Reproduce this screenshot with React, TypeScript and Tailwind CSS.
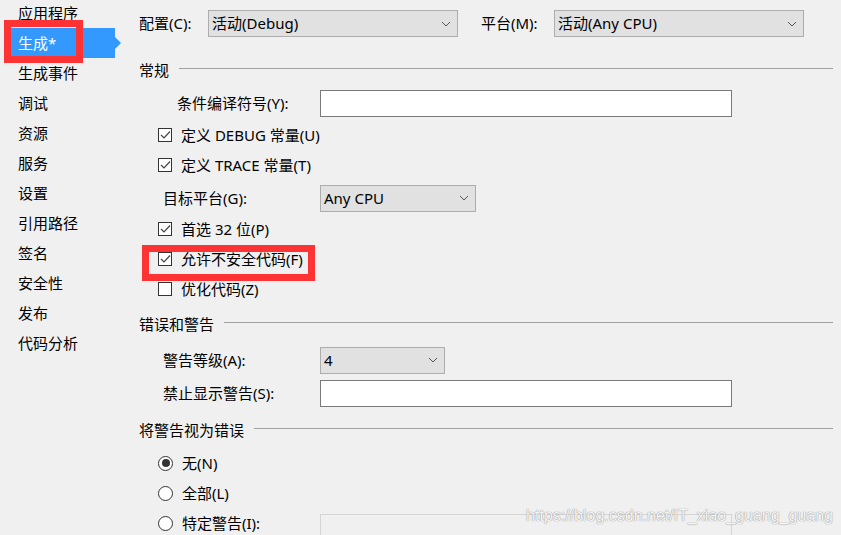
import React from 'react';

const navItems = ['应用程序', '生成*', '生成事件', '调试', '资源', '服务', '设置', '引用路径', '签名', '安全性', '发布', '代码分析'];

const Check: React.FC<{ checked?: boolean }> = ({ checked }) => (
  <span className="w-[14px] h-[14px] border border-[#333] bg-white flex items-center justify-center shrink-0">
    {checked && (
      <svg width="11" height="10" viewBox="0 0 11 10">
        <path d="M1 5 L4 8 L10 1.5" fill="none" stroke="#444" strokeWidth="1.2" />
      </svg>
    )}
  </span>
);

const Radio: React.FC<{ checked?: boolean }> = ({ checked }) => (
  <span className="w-[15px] h-[15px] rounded-full border border-[#333] bg-white flex items-center justify-center shrink-0">
    {checked && <span className="w-[8px] h-[8px] rounded-full bg-[#333]" />}
  </span>
);

const Chevron = () => (
  <svg width="10" height="6" viewBox="0 0 10 6" className="shrink-0">
    <path d="M1 1 L5 5 L9 1" fill="none" stroke="#555" strokeWidth="1" />
  </svg>
);

const Select: React.FC<{ value: string; width: string }> = ({ value, width }) => (
  <div className={`${width} h-[27px] border border-[#adadad] bg-[#e1e1e1] flex items-center justify-between pl-[3px] pr-[6px]`}>
    <span>{value}</span>
    <Chevron />
  </div>
);

const Section: React.FC<{ title: string; className: string }> = ({ title, className }) => (
  <div className={`h-[20px] flex items-center pl-[3px] ${className}`}>
    <span>{title}</span>
    <div className="flex-1 h-px bg-[#a0a0a0] ml-[10px] mt-[-4px]" />
  </div>
);

const CheckRow: React.FC<{ label: string; checked?: boolean; className?: string }> = ({ label, checked, className = '' }) => (
  <div className={`h-[30px] flex items-center pl-[22px] gap-[9px] ${className}`}>
    <Check checked={checked} />
    <span>{label}</span>
  </div>
);

export default function App() {
  return (
    <div
      className="relative w-[841px] h-[535px] overflow-hidden bg-[#f0f0f0] text-black text-[15px] flex"
      style={{ fontFamily: '"Noto Sans", "Noto Sans CJK SC", sans-serif' }}
    >
      {/* left nav */}
      <div className="w-[136px] shrink-0 mt-[-2px] pl-[11px]">
        {navItems.map((item, i) =>
          i === 1 ? (
            <div key={item} className="relative h-[30px] w-[104px] bg-[#3399ff] text-white flex items-center pl-[7px]">
              {item}
              <span className="absolute left-[104px] top-[9px] w-0 h-0 border-y-[6px] border-y-transparent border-l-[6px] border-l-[#3399ff]" />
            </div>
          ) : (
            <div key={item} className="h-[30px] flex items-center pl-[7px]">
              {item}
            </div>
          )
        )}
      </div>

      {/* right panel */}
      <div className="flex-1 flex flex-col">
        <div className="mt-[10px] h-[28px] flex items-center pl-[3px]">
          <span className="w-[69px]">配置(C):</span>
          <Select value="活动(Debug)" width="w-[250px]" />
          <span className="ml-[23px] w-[73px]">平台(M):</span>
          <Select value="活动(Any CPU)" width="w-[250px]" />
        </div>
        <div className="mt-[15px] h-px bg-[#a0a0a0]" />

        <div className="pr-[8px] flex flex-col">
          <Section title="常规" className="mt-[8px]" />
          <div className="mt-[10px] h-[27px] flex items-center">
            <span className="w-[184px] pl-[41px]">条件编译符号(Y):</span>
            <div className="w-[412px] h-[27px] border border-[#7a7a7a] bg-white" />
          </div>
          <CheckRow label="定义 DEBUG 常量(U)" checked className="mt-[3px]" />
          <CheckRow label="定义 TRACE 常量(T)" checked />
          <div className="mt-[5px] h-[26px] flex items-center">
            <span className="w-[184px] pl-[27px]">目标平台(G):</span>
            <Select value="Any CPU" width="w-[156px]" />
          </div>
          <CheckRow label="首选 32 位(P)" checked className="mt-[3px]" />
          <CheckRow label="允许不安全代码(F)" checked />
          <CheckRow label="优化代码(Z)" />

          <Section title="错误和警告" className="mt-[10px]" />
          <div className="mt-[13px] h-[26px] flex items-center">
            <span className="w-[184px] pl-[27px]">警告等级(A):</span>
            <Select value="4" width="w-[125px]" />
          </div>
          <div className="mt-[7px] h-[27px] flex items-center">
            <span className="w-[184px] pl-[27px]">禁止显示警告(S):</span>
            <div className="w-[412px] h-[27px] border border-[#7a7a7a] bg-white" />
          </div>

          <Section title="将警告视为错误" className="mt-[13px]" />
          <div className="mt-[8px] h-[30px] flex items-center pl-[22px] gap-[9px]">
            <Radio checked />
            <span>无(N)</span>
          </div>
          <div className="h-[30px] flex items-center pl-[22px] gap-[9px]">
            <Radio />
            <span>全部(L)</span>
          </div>
          <div className="h-[30px] flex items-center">
            <div className="w-[184px] flex items-center pl-[22px] gap-[9px]">
              <Radio />
              <span>特定警告(I):</span>
            </div>
            <div className="self-start mt-[6px] w-[412px] h-[27px] border border-[#d5d5d5] bg-[#f0f0f0]" />
          </div>
        </div>
      </div>

      {/* annotation boxes */}
      <div className="absolute left-[4px] top-[20px] w-[79px] h-[43px] border-[7px] border-[#ff3333]" />
      <div className="absolute left-[142px] top-[245px] w-[173px] h-[36px] border-[7px] border-[#ff3333]" />

      {/* watermark */}
      <div
        className="absolute right-[8px] bottom-[7px] text-[16px] text-[#f4f4f4]"
        style={{ fontFamily: '"Liberation Sans", sans-serif', textShadow: '0 0 1px #9a9a9a, 0 0 1px #9a9a9a' }}
      >
        https://blog.csdn.net/IT_xiao_guang_guang
      </div>
    </div>
  );
}
